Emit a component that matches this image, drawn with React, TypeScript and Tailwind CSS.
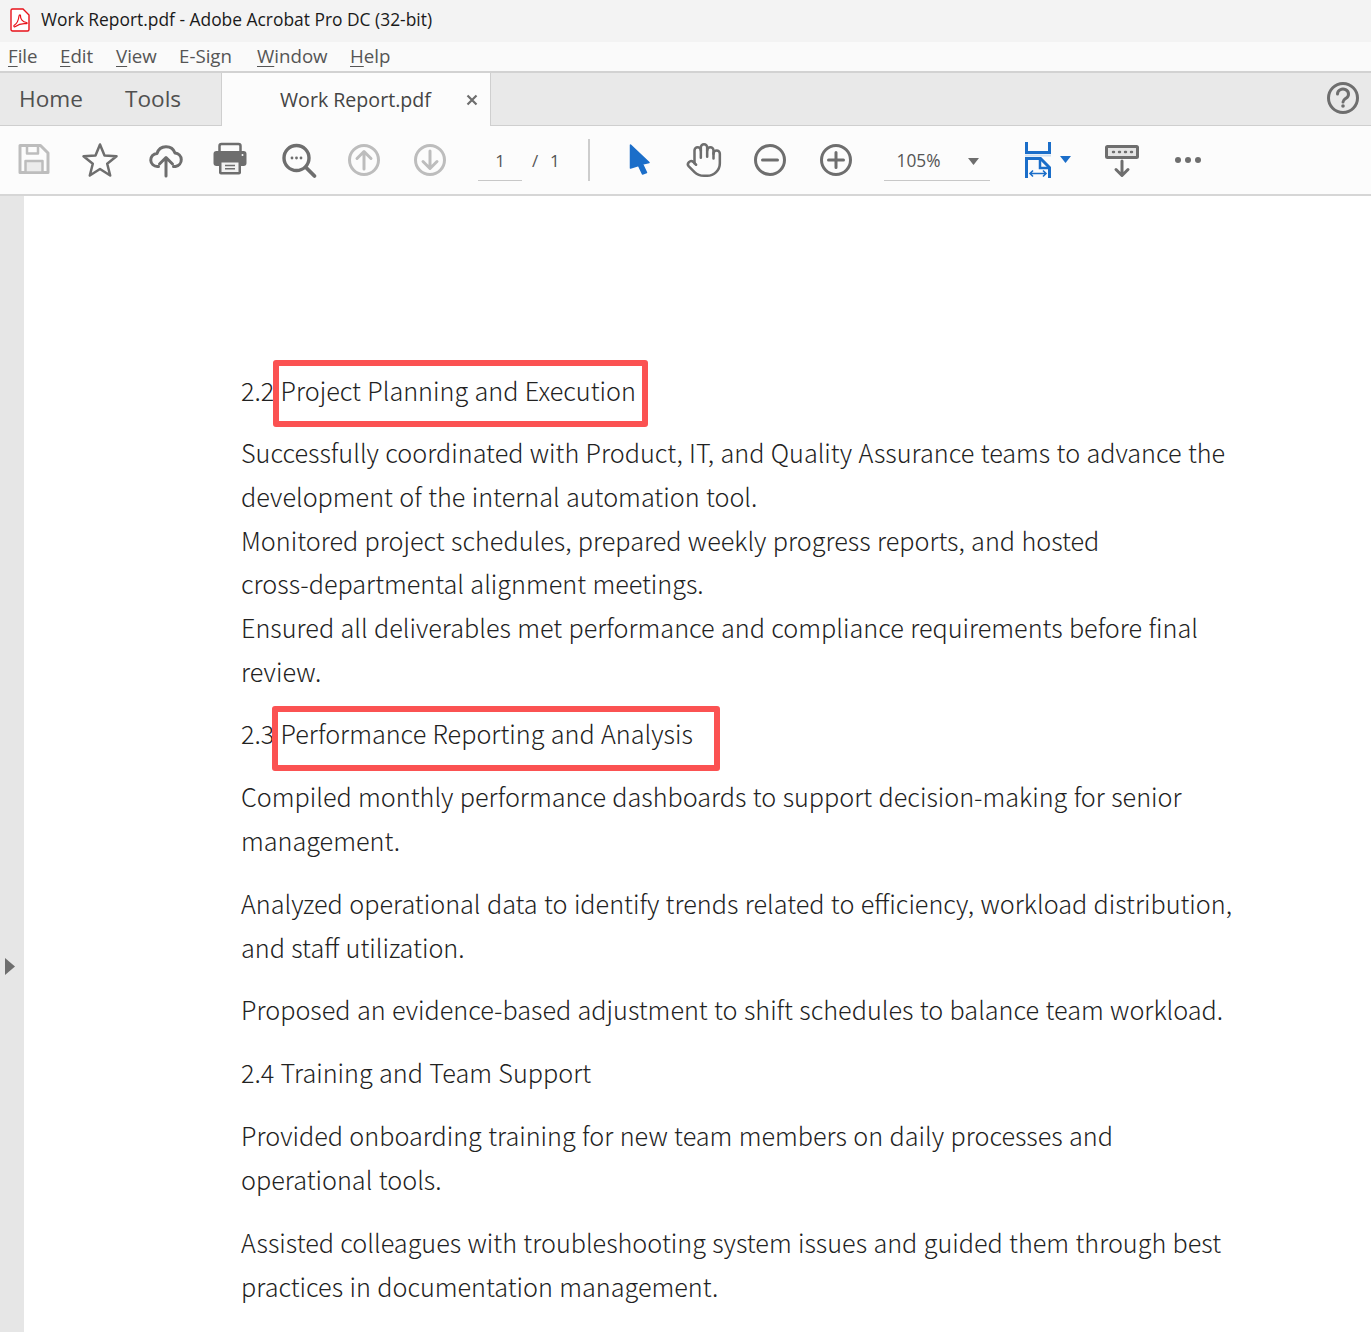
import { Hand } from "lucide-react";

const GRAY = "#6e6e6e";
const LIGHT = "#bdbdbd";
const BLUE = "#1b6ec9";

function PdfIcon() {
  return (
    <svg width="20" height="24" viewBox="0 0 20 24" fill="none">
      <path d="M2.5 1h10.5l6 6v14.5a1.5 1.5 0 0 1-1.500 1.500H2.500A1.500 1.500 0 0 1 1 21.500V2.500A1.500 1.500 0 0 1 2.500 1z" stroke="#e8121a" strokeWidth="1.400" fill="#fff" />
      <path d="M4 17.500c2.500-1.500 4.500-5 5-9.500 .2-1.500 1.600-1.500 1.500 0-.2 3 2 6 6 6.500 1 .2.800 1.300-.2 1.200-3.500-.4-7.500.3-10.800 2.800-1.100.8-2 0-1.500-1z" stroke="#e8121a" strokeWidth="1.200" />
    </svg>
  );
}

function IconSvg({ children }: { children: React.ReactNode }) {
  return (
    <svg width="40" height="40" viewBox="0 0 40 40" fill="none" strokeLinecap="round" strokeLinejoin="round">
      {children}
    </svg>
  );
}

function ArrowCircle({ up }: { up: boolean }) {
  return (
    <IconSvg>
      <circle cx="20" cy="20" r="14.500" stroke={LIGHT} strokeWidth="3" />
      {up ? (
        <path d="M20 29V12M13 18.500L20 11.500L27 18.500" stroke={LIGHT} strokeWidth="3" />
      ) : (
        <path d="M20 11V28M13 21.500L20 28.500L27 21.500" stroke={LIGHT} strokeWidth="3" />
      )}
    </IconSvg>
  );
}

function ToolButton({ children }: { children: React.ReactNode }) {
  return <div className="w-[66px] flex items-center justify-center shrink-0">{children}</div>;
}

function Menu({ first, rest, plain, width }: { first: string; rest: string; plain?: boolean; width: string }) {
  return (
    <span className={width}>
      <span className={plain ? "" : "underline underline-offset-[3px]"}>{first}</span>
      {rest}
    </span>
  );
}

function RedBox({ className }: { className: string }) {
  return <div className={`absolute border-[6px] border-[#fb5252] rounded-[3px] ${className}`} />;
}

export default function App() {
  return (
    <div className="w-[1371px] h-[1332px] overflow-hidden bg-white flex flex-col font-['Open_Sans',sans-serif] text-[#222]">
      {/* Title bar */}
      <div className="h-[42px] bg-[#f3f3f3] flex items-center pl-[10px] pb-[3px] shrink-0">
        <PdfIcon />
        <span className="ml-[11px] text-[17.400px] text-[#1a1a1a]">Work Report.pdf - Adobe Acrobat Pro DC (32-bit)</span>
      </div>

      {/* Menu */}
      <div className="h-[31px] bg-[#fafafa] border-b-2 border-[#d2d2d2] flex items-center pl-2 pb-[1px] text-[18.700px] text-[#555] shrink-0">
        <Menu first="F" rest="ile" width="w-[52px]" />
        <Menu first="E" rest="dit" width="w-[56px]" />
        <Menu first="V" rest="iew" width="w-[63px]" />
        <Menu first="E" rest="-Sign" plain width="w-[78px]" />
        <Menu first="W" rest="indow" width="w-[93px]" />
        <Menu first="H" rest="elp" width="w-[50px]" />
      </div>

      {/* Tabs */}
      <div className="h-[53px] bg-[#e9e9e9] border-b-[1.500px] border-[#cfcfcf] flex shrink-0 relative">
        <div className="w-[221px] flex items-center pl-[19px] text-[22.600px] text-[#505050]">
          <span className="w-[106px]">Home</span>
          <span>Tools</span>
        </div>
        <div className="w-[270px] h-[53px] bg-[#fcfcfc] border-x border-[#cfcfcf] flex items-center pl-[58px] z-10">
          <span className="text-[19.600px] text-[#444] w-[186px]">Work Report.pdf</span>
          <svg width="12" height="12" viewBox="0 0 12 12" stroke="#6e6e6e" strokeWidth="2.200">
            <path d="M1.500 1.500L10.500 10.500M10.500 1.500L1.500 10.500" />
          </svg>
        </div>
        <div className="ml-auto mr-[8px] flex items-center pb-[2px]">
          <IconSvg>
            <circle cx="20" cy="20" r="14.500" stroke={GRAY} strokeWidth="3" />
            <path d="M14.500 16a5.500 5 0 1 1 8.500 4.200c-1.800 1.200-3 1.800-3 3.800" stroke={GRAY} strokeWidth="3" />
            <circle cx="20" cy="28" r="1.800" fill={GRAY} />
          </IconSvg>
        </div>
      </div>

      {/* Toolbar */}
      <div className="h-[70px] bg-[#fcfcfc] border-b-2 border-[#d6d6d6] flex items-stretch pl-px pb-px shrink-0">
        <ToolButton>
          <IconSvg>
            <path d="M6 5.500h20.500l7.500 7.500v19.500H6z" stroke={LIGHT} strokeWidth="3" />
            <rect x="13" y="5.500" width="11" height="8" stroke={LIGHT} strokeWidth="2.500" />
            <rect x="11.500" y="21" width="17" height="11.500" fill="#ececec" stroke={LIGHT} strokeWidth="2.500" />
          </IconSvg>
        </ToolButton>
        <ToolButton>
          <IconSvg>
            <polygon points="20,4.500 24.500,15.500 36.500,16.300 27.200,23.800 30.200,35.500 20,29 9.800,35.500 12.800,23.800 3.500,16.300 15.500,15.500" stroke={GRAY} strokeWidth="2.500" />
          </IconSvg>
        </ToolButton>
        <ToolButton>
          <IconSvg>
            <path d="M12.500 26.500H11.500A6.500 6.500 0 0 1 11 13.500A9.500 9.500 0 0 1 29 13A6.800 6.800 0 0 1 29.500 26.500H27.500" stroke={GRAY} strokeWidth="3" />
            <path d="M20 36V18M13.500 24L20 17.500L26.500 24" stroke={GRAY} strokeWidth="3" />
          </IconSvg>
        </ToolButton>
        <ToolButton>
          <svg width="40" height="40" viewBox="0 0 40 40" fill="none">
            <path d="M7.500 12V6a2 2 0 0 1 2-2h17a2 2 0 0 1 2 2v6" stroke={GRAY} strokeWidth="2.500" />
            <rect x="1.500" y="11" width="33" height="15" rx="3" fill={GRAY} />
            <rect x="7" y="20" width="22" height="14.500" rx="2" fill={GRAY} />
            <rect x="9.500" y="22.500" width="17" height="9.500" fill="#f2f2f2" />
            <path d="M13 25.500h10M13 28.800h10" stroke={GRAY} strokeWidth="1.500" />
            <circle cx="30.500" cy="15" r="1" fill="#fff" />
          </svg>
        </ToolButton>
        <ToolButton>
          <IconSvg>
            <circle cx="18.500" cy="18" r="12.500" stroke={GRAY} strokeWidth="3.400" />
            <path d="M28 27.500L36.500 36" stroke={GRAY} strokeWidth="3.800" />
            <circle cx="14" cy="18" r="1.400" fill={GRAY} />
            <circle cx="18.500" cy="18" r="1.400" fill={GRAY} />
            <circle cx="23" cy="18" r="1.400" fill={GRAY} />
          </IconSvg>
        </ToolButton>
        <ToolButton>
          <ArrowCircle up />
        </ToolButton>
        <ToolButton>
          <ArrowCircle up={false} />
        </ToolButton>

        {/* Page number */}
        <div className="w-[44px] ml-[15px] mt-[12px] h-[43px] border-b border-[#c8c8c8] flex items-center justify-center pt-[4px] text-[17px] text-[#555] shrink-0">
          1
        </div>
        <div className="ml-[10px] w-[57px] flex items-center pt-[2px] text-[17px] text-[#555] shrink-0">
          <span className="w-[18px]">/</span>
          <span>1</span>
        </div>
        <div className="w-[1.500px] bg-[#cdcdcd] mt-[13px] h-[42px] shrink-0 -ml-px" />

        <div className="w-[15px] shrink-0" />
        <ToolButton>
          <svg width="40" height="40" viewBox="0 0 40 40" fill={BLUE} stroke={BLUE} strokeWidth="1.500" strokeLinejoin="round">
            <path d="M12.500 5L31 22.500L24.500 24L28.500 32.500L24.500 34L20.500 25.500L12.500 28z" />
          </svg>
        </ToolButton>
        <div className="w-[66px] flex items-center justify-center shrink-0">
          <Hand size={38} color={GRAY} strokeWidth={1.600} />
        </div>
        <ToolButton>
          <IconSvg>
            <circle cx="20" cy="20" r="14.500" stroke={GRAY} strokeWidth="3" />
            <path d="M12.500 20H27.500" stroke={GRAY} strokeWidth="3" />
          </IconSvg>
        </ToolButton>
        <ToolButton>
          <IconSvg>
            <circle cx="20" cy="20" r="14.500" stroke={GRAY} strokeWidth="3" />
            <path d="M12.500 20H27.500M20 12.500V27.500" stroke={GRAY} strokeWidth="3" />
          </IconSvg>
        </ToolButton>

        {/* Zoom */}
        <div className="w-[106px] ml-[15px] mt-[12px] h-[43px] border-b border-[#c8c8c8] flex items-center pl-[13px] pt-[4px] text-[17.300px] text-[#555] shrink-0">
          <span className="w-[71px]">105%</span>
          <svg width="11" height="7" viewBox="0 0 11 7" fill={GRAY}>
            <path d="M0 0H11L5.500 7z" />
          </svg>
        </div>

        {/* Fit */}
        <div className="ml-[34px] flex items-center shrink-0">
          <svg width="28" height="38" viewBox="0 0 28 38" fill="none" stroke={BLUE}>
            <path d="M2.500 1V11.500H25.500V1" strokeWidth="3" />
            <path d="M1 14.500H27" stroke="#cfe0f2" strokeWidth="2" />
            <path d="M2.500 37V17.500H16.500L25.500 26.500V37" strokeWidth="3" />
            <path d="M16 18V27H25" strokeWidth="2.500" />
            <path d="M6 32.500H22M9 29.500L6 32.500L9 35.500M19 29.500L22 32.500L19 35.500" strokeWidth="1.600" />
          </svg>
        </div>
        <div className="ml-[8px] flex items-center shrink-0">
          <svg width="11" height="7" viewBox="0 0 11 7" fill={BLUE}>
            <path d="M0 0H11L5.500 7z" />
          </svg>
        </div>

        <div className="ml-[18px] flex shrink-0">
          <ToolButton>
            <svg width="40" height="40" viewBox="0 0 40 40" fill="none" strokeLinecap="round" strokeLinejoin="round">
              <rect x="4.500" y="6.500" width="31" height="11" rx="1" fill="#e4e4e4" stroke={GRAY} strokeWidth="3" />
              <path d="M11 12H12M17 12H18M23 12H24M29 12H30" stroke={GRAY} strokeWidth="2.400" />
              <path d="M20 21V35M14 29.500L20 35.500L26 29.500" stroke={GRAY} strokeWidth="3" />
            </svg>
          </ToolButton>
          <ToolButton>
            <svg width="40" height="40" viewBox="0 0 40 40" fill={GRAY}>
              <circle cx="10" cy="20" r="3" />
              <circle cx="20" cy="20" r="3" />
              <circle cx="30" cy="20" r="3" />
            </svg>
          </ToolButton>
        </div>
      </div>

      {/* Body */}
      <div className="flex flex-1 min-h-0">
        <div className="w-[24px] bg-[#e6e6e6] pl-[5px] pt-[762px] shrink-0">
          <svg width="10" height="17" viewBox="0 0 10 17" fill={GRAY}>
            <path d="M0 0L10 8.500L0 17z" />
          </svg>
        </div>
        <div className="relative flex-1 pl-[217px] pt-[172.500px] text-[25.200px] [word-spacing:0.8px] leading-[43.620px] font-light text-[#222] font-['Noto_Sans_CJK_SC','Noto_Sans',sans-serif] whitespace-nowrap">
          <p className="mb-[19.300px]">2.2 Project Planning and Execution</p>
          <p className="mb-[19.300px]">
            Successfully coordinated with Product, IT, and Quality Assurance teams to advance the
            <br />
            development of the internal automation tool.
            <br />
            Monitored project schedules, prepared weekly progress reports, and hosted
            <br />
            cross-departmental alignment meetings.
            <br />
            Ensured all deliverables met performance and compliance requirements before final
            <br />
            review.
          </p>
          <p className="mb-[19.300px]">2.3 Performance Reporting and Analysis</p>
          <p className="mb-[19.300px]">
            Compiled monthly performance dashboards to support decision-making for senior
            <br />
            management.
          </p>
          <p className="mb-[19.300px]">
            Analyzed operational data to identify trends related to efficiency, workload distribution,
            <br />
            and staff utilization.
          </p>
          <p className="mb-[19.300px]">Proposed an evidence-based adjustment to shift schedules to balance team workload.</p>
          <p className="mb-[19.300px]">2.4 Training and Team Support</p>
          <p className="mb-[19.300px]">
            Provided onboarding training for new team members on daily processes and
            <br />
            operational tools.
          </p>
          <p>
            Assisted colleagues with troubleshooting system issues and guided them through best
            <br />
            practices in documentation management.
          </p>
          <RedBox className="left-[249px] top-[164px] w-[375px] h-[67px]" />
          <RedBox className="left-[248px] top-[510px] w-[448px] h-[65px]" />
        </div>
      </div>
    </div>
  );
}
